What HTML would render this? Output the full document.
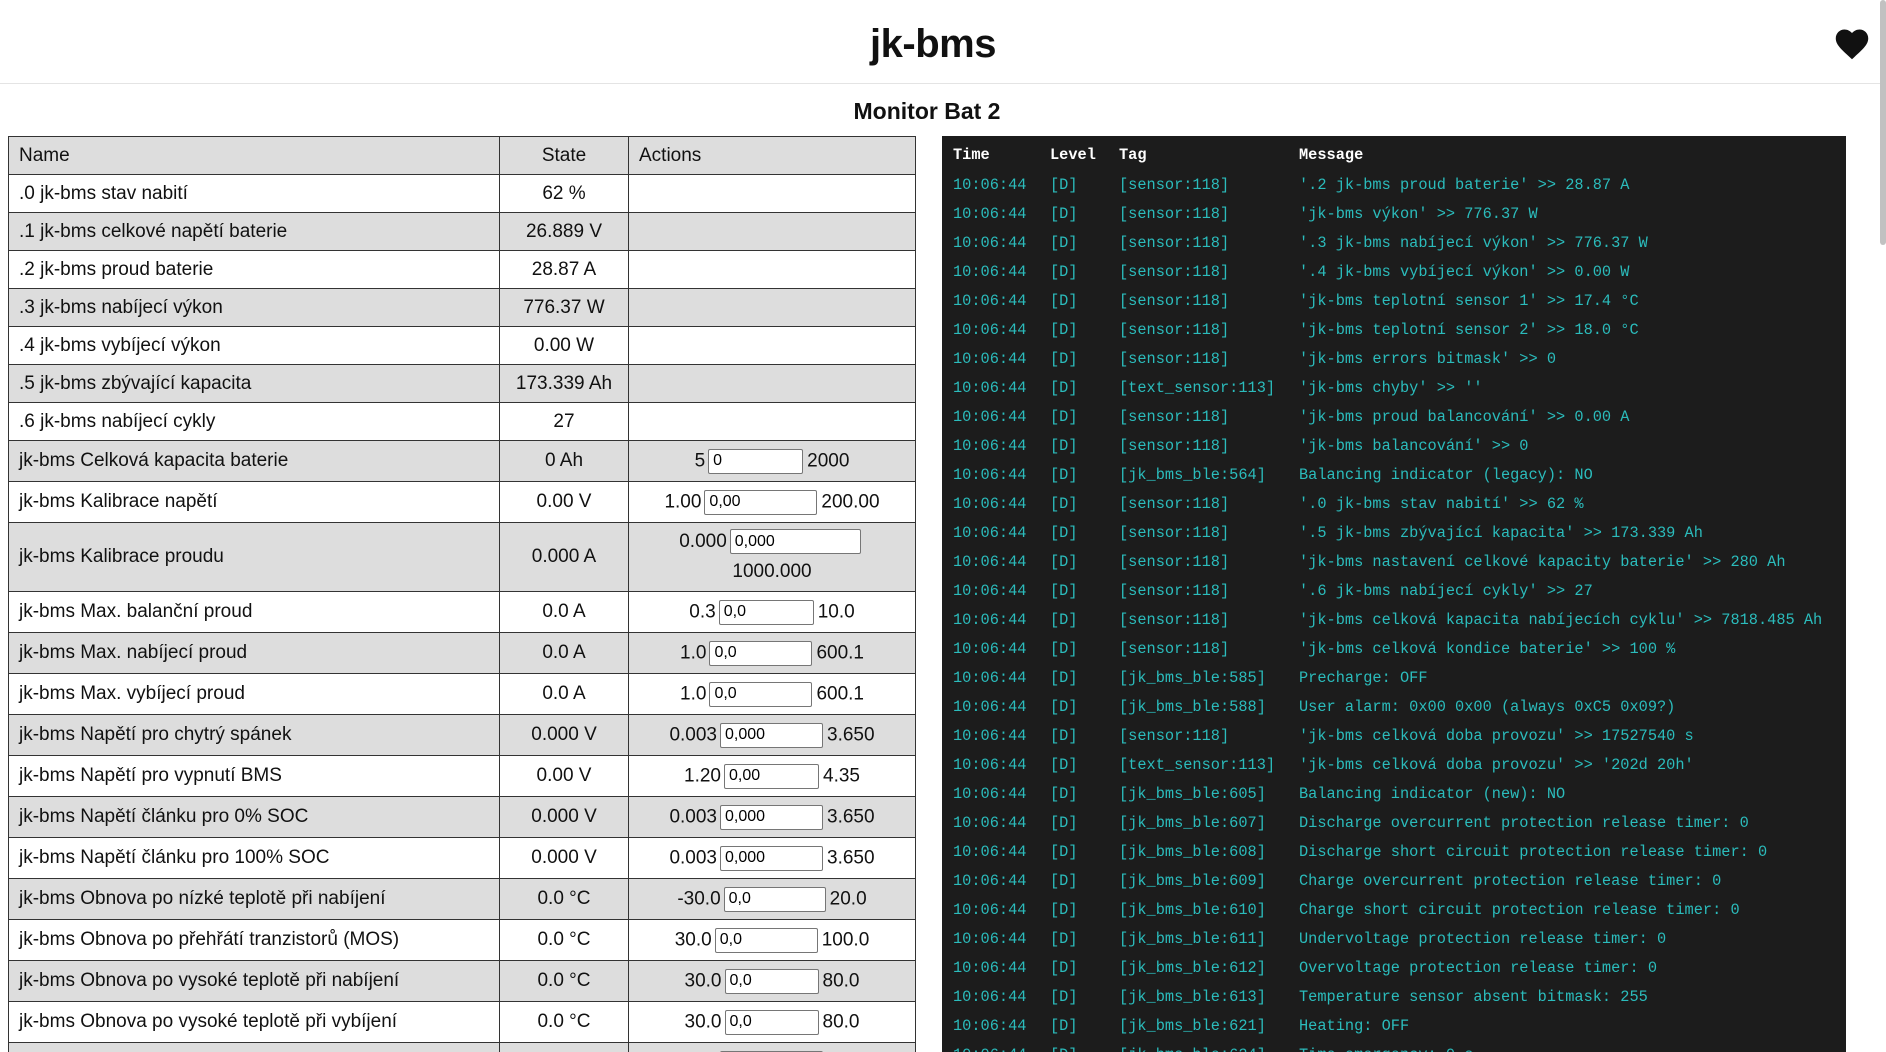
<!DOCTYPE html>
<html style="height:1052px;overflow:hidden"><head><meta charset="utf-8"><style>
*{box-sizing:border-box}
body{margin:0;width:1886px;height:1052px;overflow:hidden;background:#fff;font-family:"Liberation Sans",sans-serif;color:#111;position:relative}
.hdr{position:absolute;left:0;top:0;width:1880px;height:84px;border-bottom:1px solid #e4e4e4}
.hdr h1{margin:0;position:absolute;left:0;width:1866px;text-align:center;top:22px;font-size:40px;font-weight:bold;letter-spacing:-0.5px}
.heart{position:absolute;left:1833px;top:26px}
.sb{position:absolute;left:1880px;top:0;width:6px;height:245px;background:#c1c1c1;border-radius:3px}
.mon{position:absolute;left:0;width:1854px;text-align:center;top:98px;font-size:23px;font-weight:bold}
table{position:absolute;left:8px;top:136px;width:907px;border-collapse:collapse;table-layout:fixed;font-size:19px}
td,th{border:1.5px solid #333;padding:0 0 0 10px;font-weight:normal;text-align:left;white-space:nowrap;overflow:hidden}
th{height:38px;background:#ddd;text-align:left}
td.s,th.s{text-align:center;padding:0}
td.a{text-align:center;padding:0}
tr.g td{background:#ddd}
tr.r td{height:38px}
tr.q td{height:41px}
input{font-family:"Liberation Sans",sans-serif;font-size:16px;height:25px;border:1px solid #767676;border-radius:2px;padding:0 4px;vertical-align:middle;margin:0 4px 0 3px;background:#fff}
.log{position:absolute;left:942px;top:136px;width:904px;height:916px;overflow:hidden;background:#1c1c1c;font-family:"Liberation Mono",monospace;font-size:15.3px;color:#2bbcbc;padding-top:5px}
.log div{height:29px;line-height:29px;white-space:pre;position:relative}
.log span{position:absolute;top:0}
.log .h{color:#fff;font-weight:bold;height:30px}
.c1{left:11px}.c2{left:108px}.c3{left:177px}.c4{left:357px}
</style></head><body>
<div class="hdr"><h1>jk-bms</h1>
<svg class="heart" width="38" height="34" viewBox="0 0 24 22"><path d="M12 21.5 10.5 20.1C5 15.1 1.5 12 1.5 8 1.5 4.8 4 2.3 7.2 2.3c1.8 0 3.6.9 4.8 2.3 1.2-1.4 3-2.3 4.8-2.3C20 2.3 22.5 4.8 22.5 8c0 4-3.5 7.1-9 12.1z" fill="#111"/></svg>
</div>
<div class="sb"></div>
<div class="mon">Monitor Bat 2</div>
<table>
<colgroup><col style="width:491px"><col style="width:129px"><col style="width:287px"></colgroup>
<tr><th>Name</th><th class="s">State</th><th>Actions</th></tr>
<tr class="r"><td>.0 jk-bms stav nabití</td><td class="s">62 %</td><td></td></tr>
<tr class="r g"><td>.1 jk-bms celkové napětí baterie</td><td class="s">26.889 V</td><td></td></tr>
<tr class="r"><td>.2 jk-bms proud baterie</td><td class="s">28.87 A</td><td></td></tr>
<tr class="r g"><td>.3 jk-bms nabíjecí výkon</td><td class="s">776.37 W</td><td></td></tr>
<tr class="r"><td>.4 jk-bms vybíjecí výkon</td><td class="s">0.00 W</td><td></td></tr>
<tr class="r g"><td>.5 jk-bms zbývající kapacita</td><td class="s">173.339 Ah</td><td></td></tr>
<tr class="r"><td>.6 jk-bms nabíjecí cykly</td><td class="s">27</td><td></td></tr>
<tr class="q g"><td>jk-bms Celková kapacita baterie</td><td class="s">0 Ah</td><td class="a">5<input value="0" style="width:95px">2000</td></tr>
<tr class="q"><td>jk-bms Kalibrace napětí</td><td class="s">0.00 V</td><td class="a">1.00<input value="0,00" style="width:113px">200.00</td></tr>
<tr class="g"><td style="height:69px">jk-bms Kalibrace proudu</td><td class="s">0.000 A</td><td class="a" style="white-space:normal;line-height:30px">0.000<input value="0,000" style="width:131px"><br>1000.000</td></tr>
<tr class="q"><td>jk-bms Max. balanční proud</td><td class="s">0.0 A</td><td class="a">0.3<input value="0,0" style="width:95px">10.0</td></tr>
<tr class="q g"><td>jk-bms Max. nabíjecí proud</td><td class="s">0.0 A</td><td class="a">1.0<input value="0,0" style="width:103px">600.1</td></tr>
<tr class="q"><td>jk-bms Max. vybíjecí proud</td><td class="s">0.0 A</td><td class="a">1.0<input value="0,0" style="width:103px">600.1</td></tr>
<tr class="q g"><td>jk-bms Napětí pro chytrý spánek</td><td class="s">0.000 V</td><td class="a">0.003<input value="0,000" style="width:103px">3.650</td></tr>
<tr class="q"><td>jk-bms Napětí pro vypnutí BMS</td><td class="s">0.00 V</td><td class="a">1.20<input value="0,00" style="width:95px">4.35</td></tr>
<tr class="q g"><td>jk-bms Napětí článku pro 0% SOC</td><td class="s">0.000 V</td><td class="a">0.003<input value="0,000" style="width:103px">3.650</td></tr>
<tr class="q"><td>jk-bms Napětí článku pro 100% SOC</td><td class="s">0.000 V</td><td class="a">0.003<input value="0,000" style="width:103px">3.650</td></tr>
<tr class="q g"><td>jk-bms Obnova po nízké teplotě při nabíjení</td><td class="s">0.0 °C</td><td class="a">-30.0<input value="0,0" style="width:102px">20.0</td></tr>
<tr class="q"><td>jk-bms Obnova po přehřátí tranzistorů (MOS)</td><td class="s">0.0 °C</td><td class="a">30.0<input value="0,0" style="width:103px">100.0</td></tr>
<tr class="q g"><td>jk-bms Obnova po vysoké teplotě při nabíjení</td><td class="s">0.0 °C</td><td class="a">30.0<input value="0,0" style="width:94px">80.0</td></tr>
<tr class="q"><td>jk-bms Obnova po vysoké teplotě při vybíjení</td><td class="s">0.0 °C</td><td class="a">30.0<input value="0,0" style="width:94px">80.0</td></tr>
<tr class="q g"><td>&nbsp;</td><td class="s"></td><td class="a"><input value="" style="width:103px"></td></tr>
</table>
<div class="log">
<div class="h"><span class="c1">Time</span><span class="c2">Level</span><span class="c3">Tag</span><span class="c4">Message</span></div>
<div><span class="c1">10:06:44</span><span class="c2">[D]</span><span class="c3">[sensor:118]</span><span class="c4">'.2 jk-bms proud baterie' &gt;&gt; 28.87 A</span></div>
<div><span class="c1">10:06:44</span><span class="c2">[D]</span><span class="c3">[sensor:118]</span><span class="c4">'jk-bms výkon' &gt;&gt; 776.37 W</span></div>
<div><span class="c1">10:06:44</span><span class="c2">[D]</span><span class="c3">[sensor:118]</span><span class="c4">'.3 jk-bms nabíjecí výkon' &gt;&gt; 776.37 W</span></div>
<div><span class="c1">10:06:44</span><span class="c2">[D]</span><span class="c3">[sensor:118]</span><span class="c4">'.4 jk-bms vybíjecí výkon' &gt;&gt; 0.00 W</span></div>
<div><span class="c1">10:06:44</span><span class="c2">[D]</span><span class="c3">[sensor:118]</span><span class="c4">'jk-bms teplotní sensor 1' &gt;&gt; 17.4 °C</span></div>
<div><span class="c1">10:06:44</span><span class="c2">[D]</span><span class="c3">[sensor:118]</span><span class="c4">'jk-bms teplotní sensor 2' &gt;&gt; 18.0 °C</span></div>
<div><span class="c1">10:06:44</span><span class="c2">[D]</span><span class="c3">[sensor:118]</span><span class="c4">'jk-bms errors bitmask' &gt;&gt; 0</span></div>
<div><span class="c1">10:06:44</span><span class="c2">[D]</span><span class="c3">[text_sensor:113]</span><span class="c4">'jk-bms chyby' &gt;&gt; ''</span></div>
<div><span class="c1">10:06:44</span><span class="c2">[D]</span><span class="c3">[sensor:118]</span><span class="c4">'jk-bms proud balancování' &gt;&gt; 0.00 A</span></div>
<div><span class="c1">10:06:44</span><span class="c2">[D]</span><span class="c3">[sensor:118]</span><span class="c4">'jk-bms balancování' &gt;&gt; 0</span></div>
<div><span class="c1">10:06:44</span><span class="c2">[D]</span><span class="c3">[jk_bms_ble:564]</span><span class="c4">Balancing indicator (legacy): NO</span></div>
<div><span class="c1">10:06:44</span><span class="c2">[D]</span><span class="c3">[sensor:118]</span><span class="c4">'.0 jk-bms stav nabití' &gt;&gt; 62 %</span></div>
<div><span class="c1">10:06:44</span><span class="c2">[D]</span><span class="c3">[sensor:118]</span><span class="c4">'.5 jk-bms zbývající kapacita' &gt;&gt; 173.339 Ah</span></div>
<div><span class="c1">10:06:44</span><span class="c2">[D]</span><span class="c3">[sensor:118]</span><span class="c4">'jk-bms nastavení celkové kapacity baterie' &gt;&gt; 280 Ah</span></div>
<div><span class="c1">10:06:44</span><span class="c2">[D]</span><span class="c3">[sensor:118]</span><span class="c4">'.6 jk-bms nabíjecí cykly' &gt;&gt; 27</span></div>
<div><span class="c1">10:06:44</span><span class="c2">[D]</span><span class="c3">[sensor:118]</span><span class="c4">'jk-bms celková kapacita nabíjecích cyklu' &gt;&gt; 7818.485 Ah</span></div>
<div><span class="c1">10:06:44</span><span class="c2">[D]</span><span class="c3">[sensor:118]</span><span class="c4">'jk-bms celková kondice baterie' &gt;&gt; 100 %</span></div>
<div><span class="c1">10:06:44</span><span class="c2">[D]</span><span class="c3">[jk_bms_ble:585]</span><span class="c4">Precharge: OFF</span></div>
<div><span class="c1">10:06:44</span><span class="c2">[D]</span><span class="c3">[jk_bms_ble:588]</span><span class="c4">User alarm: 0x00 0x00 (always 0xC5 0x09?)</span></div>
<div><span class="c1">10:06:44</span><span class="c2">[D]</span><span class="c3">[sensor:118]</span><span class="c4">'jk-bms celková doba provozu' &gt;&gt; 17527540 s</span></div>
<div><span class="c1">10:06:44</span><span class="c2">[D]</span><span class="c3">[text_sensor:113]</span><span class="c4">'jk-bms celková doba provozu' &gt;&gt; '202d 20h'</span></div>
<div><span class="c1">10:06:44</span><span class="c2">[D]</span><span class="c3">[jk_bms_ble:605]</span><span class="c4">Balancing indicator (new): NO</span></div>
<div><span class="c1">10:06:44</span><span class="c2">[D]</span><span class="c3">[jk_bms_ble:607]</span><span class="c4">Discharge overcurrent protection release timer: 0</span></div>
<div><span class="c1">10:06:44</span><span class="c2">[D]</span><span class="c3">[jk_bms_ble:608]</span><span class="c4">Discharge short circuit protection release timer: 0</span></div>
<div><span class="c1">10:06:44</span><span class="c2">[D]</span><span class="c3">[jk_bms_ble:609]</span><span class="c4">Charge overcurrent protection release timer: 0</span></div>
<div><span class="c1">10:06:44</span><span class="c2">[D]</span><span class="c3">[jk_bms_ble:610]</span><span class="c4">Charge short circuit protection release timer: 0</span></div>
<div><span class="c1">10:06:44</span><span class="c2">[D]</span><span class="c3">[jk_bms_ble:611]</span><span class="c4">Undervoltage protection release timer: 0</span></div>
<div><span class="c1">10:06:44</span><span class="c2">[D]</span><span class="c3">[jk_bms_ble:612]</span><span class="c4">Overvoltage protection release timer: 0</span></div>
<div><span class="c1">10:06:44</span><span class="c2">[D]</span><span class="c3">[jk_bms_ble:613]</span><span class="c4">Temperature sensor absent bitmask: 255</span></div>
<div><span class="c1">10:06:44</span><span class="c2">[D]</span><span class="c3">[jk_bms_ble:621]</span><span class="c4">Heating: OFF</span></div>
<div><span class="c1">10:06:44</span><span class="c2">[D]</span><span class="c3">[jk_bms_ble:624]</span><span class="c4">Time emergency: 0 s</span></div>
</div>
</body></html>
